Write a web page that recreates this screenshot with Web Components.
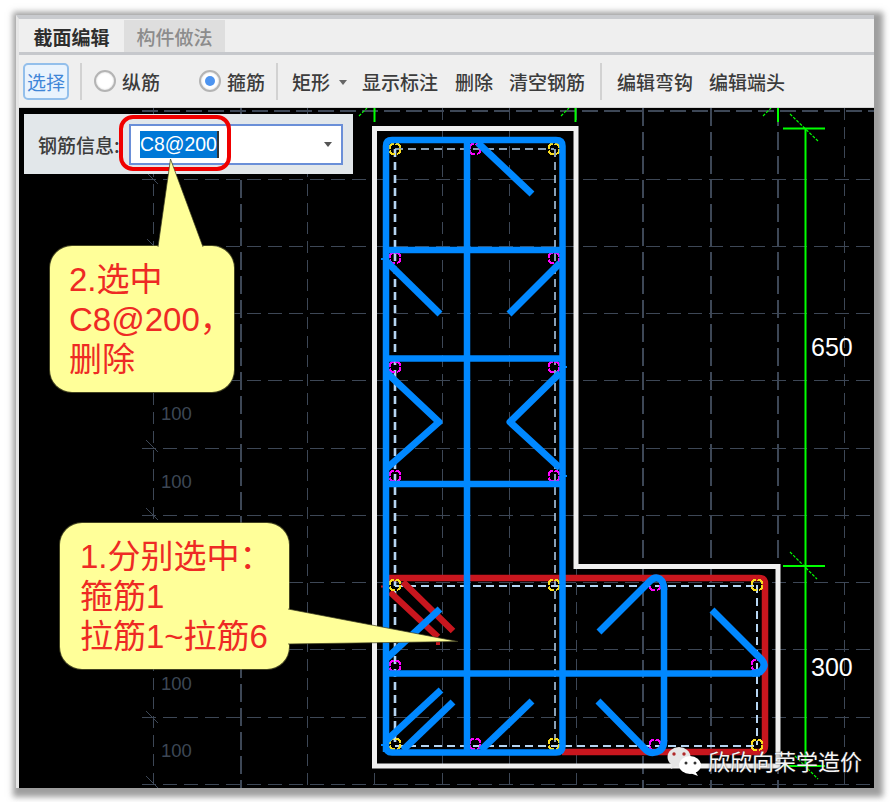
<!DOCTYPE html>
<html lang="zh"><head><meta charset="utf-8"><title>截面编辑</title>
<style>
html,body{margin:0;background:#fff;}
body{width:890px;height:802px;overflow:hidden;font-family:"Liberation Sans","Noto Sans CJK SC",sans-serif;}
</style></head><body>
<gj-app>
  <gj-tabs>
    <gj-tab active>截面编辑</gj-tab>
    <gj-tab>构件做法</gj-tab>
  </gj-tabs>
  <gj-toolbar>
    <gj-tool pressed>选择</gj-tool>
    <gj-sep style="margin-left:11px"></gj-sep>
    <gj-radio style="margin-left:12px">纵筋</gj-radio>
    <gj-radio checked style="margin-left:39px">箍筋</gj-radio>
    <gj-sep style="margin-left:11px"></gj-sep>
    <gj-tool menu style="margin-left:14px">矩形</gj-tool>
    <gj-tool style="margin-left:15px">显示标注</gj-tool>
    <gj-tool style="margin-left:17px">删除</gj-tool>
    <gj-tool style="margin-left:16px">清空钢筋</gj-tool>
    <gj-sep style="margin-left:15px"></gj-sep>
    <gj-tool style="margin-left:15px">编辑弯钩</gj-tool>
    <gj-tool style="margin-left:16px">编辑端头</gj-tool>
  </gj-toolbar>
  <gj-canvas>
    <gj-info label="钢筋信息:" value="C8@200"></gj-info>
    <gj-highlight></gj-highlight>
    <gj-callout style="--x:31px;--y:138px;--w:184px;--h:146px;--pl:19px;--pt:14px" tail="108,1 120.5,-87 153,1">2.选中<br>C8@200，<br>删除</gj-callout>
    <gj-callout style="--x:41px;--y:415px;--w:229px;--h:146px;--pl:20px;--pt:14px" tail="228,86 398,118.5 228,121">1.分别选中：<br>箍筋1<br>拉筋1~拉筋6</gj-callout>
    <gj-watermark>欣欣向荣学造价</gj-watermark>
  </gj-canvas>
</gj-app>
<script>
const def=(name,html,init)=>customElements.define(name,class extends HTMLElement{
  constructor(){super();const r=this.attachShadow({mode:'open'});r.innerHTML=typeof html==='function'?html(this):html;}
  connectedCallback(){if(init)init(this,this.shadowRoot);}
});
def('gj-app',`<style>
:host{display:flex;flex-direction:column;box-sizing:border-box;position:absolute;left:16px;top:15px;width:858px;height:773px;
background:#efefef;border-left:3px solid #e6e6e6;border-top:4px solid #c9cbcf;
box-shadow:3px 3px 6px 6px rgba(120,120,120,.72);}
</style><slot></slot>`);
def('gj-tabs',`<style>
:host{display:flex;align-items:stretch;box-sizing:border-box;height:36px;padding:1px 0 0 2px;gap:2px;background:#efefef;border-bottom:3px solid #c6c8cc;flex:none}
</style><slot></slot>`);
def('gj-tab',`<style>
:host{display:flex;align-items:center;justify-content:center;width:101px;font-size:19px;font-weight:500;color:#8c8c8c;background:#dedede;font-family:"Noto Sans CJK SC","Liberation Sans",sans-serif;}
:host([active]){background:#efefef;color:#2e2e2e;font-weight:700;}
</style><slot></slot>`);
def('gj-toolbar',`<style>
:host{display:flex;align-items:center;box-sizing:border-box;height:53px;padding:0 0 0 4px;background:#efefef;border-bottom:1px solid #d4d4d4;flex:none;font-size:19px;font-weight:500;color:#3c3c3c;font-family:"Noto Sans CJK SC","Liberation Sans",sans-serif;}
</style><slot></slot>`);
def('gj-tool',`<style>
:host{display:inline-flex;align-items:center;flex:none;white-space:nowrap;height:37px;box-sizing:border-box;position:relative}
:host([pressed]){width:46px;justify-content:center;background:#e9f3fd;border:2px solid #93bfeb;border-radius:5px;color:#3f86d8;font-weight:400}
:host([menu]){padding-right:17px}
i{display:none;position:absolute;right:0;top:17px;width:0;height:0;border:4px solid transparent;border-top:5px solid #666;border-bottom:0}
:host([menu]) i{display:block}
</style><slot></slot><i></i>`);
def('gj-sep',`<style>:host{display:block;flex:none;width:2px;height:37px;background:#d2d2d2}</style>`);
def('gj-radio',`<style>
:host{display:inline-flex;align-items:center;flex:none;gap:6px}
b{display:block;box-sizing:border-box;width:22px;height:22px;border-radius:50%;background:#fff;border:2px solid #b4b4b4;position:relative;box-shadow:inset 0 0 2px #ccc}
:host([checked]) b::after{content:"";position:absolute;left:4px;top:4px;width:10px;height:10px;border-radius:50%;background:#4d94f0}
</style><b></b><slot></slot>`);
def('gj-canvas',()=>{
  const hs=[111,179,246,313,380,448,515,582,649,717,784];
  const vs=[153,241,307,374,442,509,576,643,711,778,844];
  const thickV=new Set([241,643,711,778]);
  let g='';
  hs.forEach(y=>g+=`<line x1="142" x2="874" y1="${y}" y2="${y}" stroke-width="${y===111?2:1}" stroke-dasharray="${y===111?'16 6':'14 7'}" shape-rendering="crispEdges"/>`);
  vs.forEach(x=>g+=`<line x1="${x}" x2="${x}" y1="108" y2="788" stroke-width="${thickV.has(x)?2:1}" stroke-dasharray="${thickV.has(x)?'18 6':'12 7'}" shape-rendering="crispEdges"/>`);
  [[147,173,158,184],[147,239,158,250],[146,440,158,452],[146,508,158,520],[146,711,158,723],[146,776,158,788]].forEach(a=>g+=`<line x1="${a[0]}" y1="${a[1]}" x2="${a[2]}" y2="${a[3]}" stroke-width="1"/>`);
  const tx=[[161,420],[161,488],[161,690],[161,757]].map(p=>`<text x="${p[0]}" y="${p[1]}" font-size="18.5" fill="#3d4755">100</text>`).join('');
  const pin=(x,y,c)=>`<circle cx="${x}" cy="${y}" r="5.5" fill="none" stroke="${c}" stroke-width="2" stroke-dasharray="6.6 2" shape-rendering="crispEdges"/>`;
  const Y='#f8dc1e',M='#ff00ff';
  const pins=[[395,149,Y],[475,149,M],[554,149,Y],[395,258,M],[554,258,M],[395,367,M],[554,367,M],[395,476,M],[554,476,M],[395,585,Y],[554,585,Y],[655,585,M],[757,585,Y],[395,666,M],[757,665,M],[395,744,Y],[475,744,M],[554,744,Y],[655,745,M],[757,745,Y]].map(p=>pin(...p)).join('');
  const main=['M386,752 L386,146 Q386,140 392,140 L556,140 Q562.5,140 562.5,146 L562.5,746 Q562.5,752.5 556,752.5 L392,752.5 Q386,752.5 386,746',
   'M467,140V752','M386,250H562','M386,358.5H562','M386,484H562','M386,673.5H760',
   'M664,590V740'].map(d=>`<path d="${d}"/>`).join('');
  const diag=['M478,143L532,194','M387,262L440,314','M560,263L509,314','M387,373L439,422L387,468','M560,373L510,422L560,468',
   'M440,609L387,658','M441,690L387,740','M453,702L403,750','M532,701L481,750',
   'M599,632L650,581Q655,576 660,579Q664,582 664,590','M664,740Q664,750 657,752Q650,754 646,750L598,701',
   'M712,610L762,660Q767,666 760,672L752,673.5'].map(d=>`<path d="${d}"/>`).join('');
  return `<style>
:host{display:block;flex:1;position:relative;background:#000;overflow:hidden;min-height:0}
svg{display:block;position:absolute;left:0;top:0}
text{font-family:"Liberation Sans",sans-serif}
</style>
<svg width="855" height="680" viewBox="19 108 855 680">
<g fill="none" stroke="#3d4756">${g}</g>${tx}
<path d="M374.5,128.5H576V566.5H778V766H374.5Z" fill="none" stroke="#f0f0f0" stroke-width="5"/>
<g fill="none" stroke="#00ff00" stroke-width="2">
<path d="M805.5,128V766M783,128.5H825M783,566H825M783,766H825M374.5,108V122M575.5,108V122M778,108V122"/>
<path stroke-width="1.2" stroke-dasharray="3 1.5" d="M790,114L818,141M790,552L817,579M795,756L818,779M359,116L367,108M561,116L569,108M763,116L771,108"/>
</g>
<text x="811" y="356" font-size="25" fill="#fff">650</text>
<text x="811" y="676" font-size="25" fill="#fff">300</text>
<g fill="none" stroke="#b6d5f2" stroke-dasharray="8 5">
<path stroke-width="2.6" d="M395,149V744"/>
<path stroke-width="1.5" d="M395,149H554M555,149V744"/>
<path stroke-width="2" d="M395,586H757M395,746H757M757,585V745"/>
</g>
<g fill="none" stroke="#c8161e" stroke-width="6.5">
<path d="M388,578H759Q765,578 765,584V746Q765,752 759,752H562"/>
<path d="M403,582L453,631M390,592L438,637"/>
<path stroke-width="2" d="M381,586.5H388"/>
</g>
<rect x="436" y="642" width="4" height="3" fill="#c8161e"/>
${pins}
<g fill="none" stroke="#0088ff" stroke-linejoin="round">
<g stroke-width="6.5">${main}</g><g stroke-width="7">${diag}</g>
<path stroke-width="2" d="M381,259H386M381,745H386M562,367H567M562,476H567"/>
</g>
</svg><slot></slot>`;
});
def('gj-info',h=>`<style>
:host{position:absolute;left:5px;top:6px;width:329px;height:60px;box-sizing:border-box;display:flex;align-items:center;padding-left:14px;background:#e2e7ea;font-size:19px;font-weight:500;color:#3c3c3c;font-family:"Noto Sans CJK SC","Liberation Sans",sans-serif;}
.l{width:91px;flex:none;white-space:nowrap}
.i{flex:none;box-sizing:border-box;width:214px;height:41px;background:#fff;border:2px solid #6a8fd8;display:flex;align-items:center;justify-content:space-between;padding:0 9px 0 9px}
.s{display:block;height:27px;background:#0078d7;color:#fff;font:400 19.4px/27px "Liberation Sans",sans-serif;border-right:2px solid #333;}
.a{width:0;height:0;border:4px solid transparent;border-top:5px solid #555;border-bottom:0}
</style><span class="l">${h.getAttribute('label')}</span><div class="i"><span class="s">${h.getAttribute('value')}</span><span class="a"></span></div>`);
def('gj-highlight',`<style>:host{position:absolute;left:100px;top:7px;width:112px;height:56px;box-sizing:border-box;border:4px solid #f00000;border-radius:14px}</style>`);
def('gj-callout',h=>{
  const t=h.getAttribute('tail');
  return `<style>
:host{position:absolute;left:var(--x);top:var(--y);width:var(--w);height:var(--h);box-sizing:border-box;padding:var(--pt) 0 0 var(--pl);background:#ffff99;border-radius:22px;box-shadow:0 0 0 1px rgba(120,120,60,.55);color:#ee2a24;font:33px/40px "Liberation Sans","Noto Sans CJK SC",sans-serif;white-space:nowrap}
svg{position:absolute;left:0;top:0;overflow:visible}
</style><svg width="1" height="1"><polygon points="${t}" fill="#ffff99"/><polyline points="${t}" fill="none" stroke="rgba(60,60,30,.7)" stroke-width="1"/></svg><slot></slot>`;
});
def('gj-watermark',`<style>
:host{position:absolute;left:648px;top:639px;display:flex;align-items:flex-start;gap:7px;color:#f6f6f6;font:22px/30px "Noto Sans CJK SC","Liberation Sans",sans-serif;text-shadow:0 0 2px #333;white-space:nowrap}
svg{display:block;flex:none}
span{display:block;margin-top:-2px}
</style><svg width="34" height="30" viewBox="0 0 34 30"><ellipse cx="12" cy="10" rx="11.5" ry="10" fill="#e6e6e6"/><path d="M5,16L4,22L11,18Z" fill="#e6e6e6"/><circle cx="7" cy="7" r="1.7" fill="#b02a2a"/><circle cx="17" cy="7" r="1.7" fill="#b02a2a"/><ellipse cx="23" cy="18" rx="11" ry="9" fill="#fff"/><path d="M28,24L31,29L23,26Z" fill="#fff"/><circle cx="19" cy="16" r="1.5" fill="#333"/><circle cx="28" cy="16" r="1.5" fill="#333"/></svg><span><slot></slot></span>`);
</script>
</body></html>
